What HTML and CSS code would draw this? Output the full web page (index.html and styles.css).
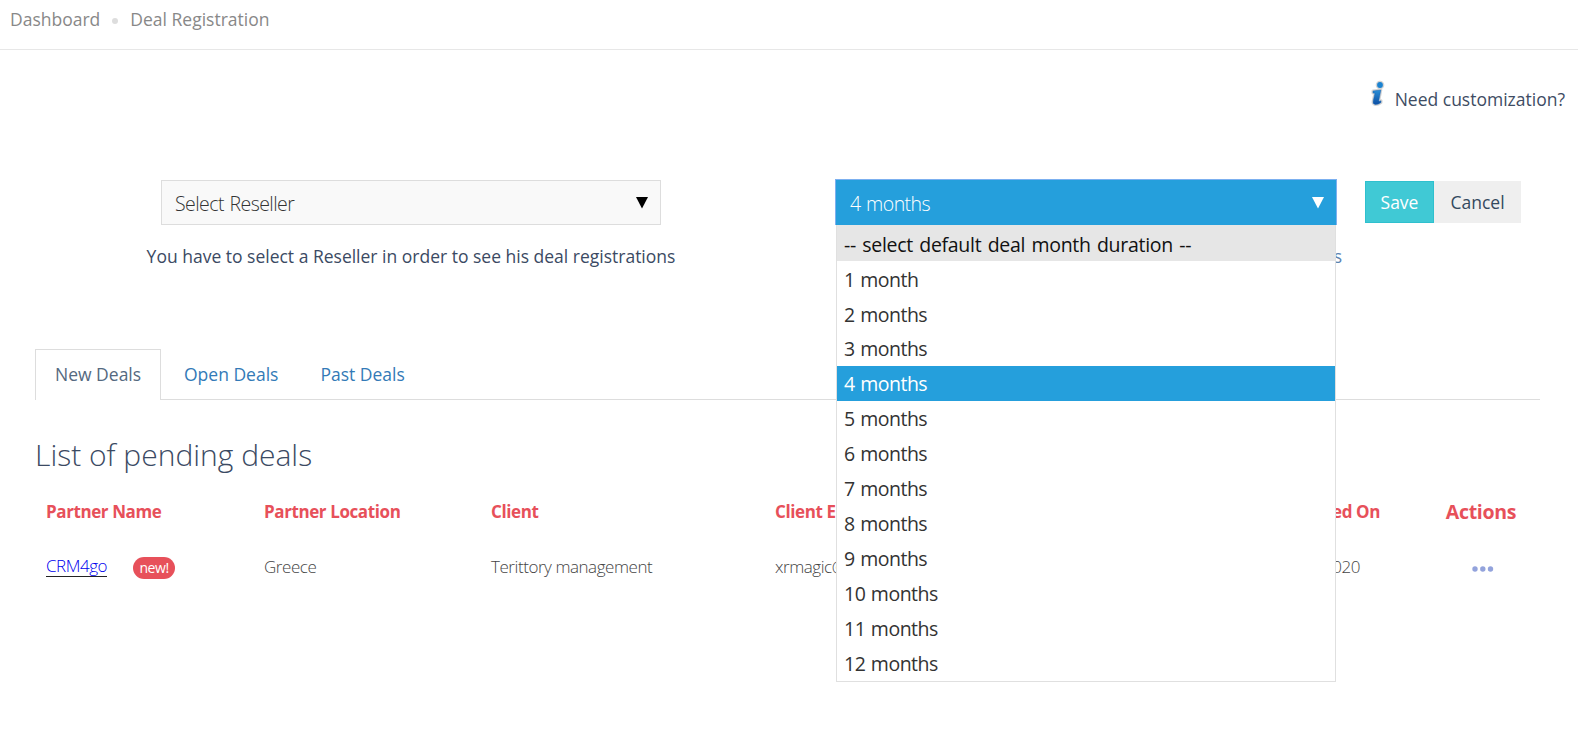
FILE: index.html
```html
<!DOCTYPE html>
<html lang="en">
<head>
<meta charset="utf-8">
<title>Deal Registration</title>
<link rel="stylesheet" href="styles.css">
</head>
<body>
<nav class="breadcrumb"><span class="crumb">Dashboard</span><i class="crumb-dot"></i><span class="crumb">Deal Registration</span></nav>
<main class="page">
  <div class="help">
    <svg class="help-icon" width="18" height="28" viewBox="0 0 18 28">
      <defs><linearGradient id="blue" x1="0" y1="0" x2="0" y2="1"><stop offset="0" stop-color="#2a8fd6"/><stop offset="1" stop-color="#0d4ea3"/></linearGradient></defs>
      <g stroke="#d4d4d4" stroke-width="3" stroke-linejoin="round" fill="#d4d4d4"><circle cx="11" cy="5" r="2.8"/><path d="M4 11L11.800 10L9.800 20.500Q9.700 22 12 20.800L12 22.500Q9 24.800 6.200 24.500Q3.500 24 4.200 21L6 13.200L4 13Z"/></g>
      <circle cx="11" cy="5" r="2.900" fill="#1b83d1"/>
      <path fill="url(#blue)" stroke="#1765b4" stroke-width=".5" d="M4 11L11.800 10L9.800 20.500Q9.700 22 12 20.800L12 22.500Q9 24.800 6.200 24.500Q3.500 24 4.200 21L6 13.200L4 13Z"/>
    </svg>
    <span class="help-text">Need customization?</span>
  </div>

  <section class="filters">
    <div class="filter">
      <div class="select"><span class="select-text">Select Reseller</span><svg class="caret" width="12" height="12" viewBox="0 0 12 12"><path d="M0 0H12L6 11.500Z" fill="currentColor"/></svg></div>
      <p class="hint">You have to select a Reseller in order to see his deal registrations</p>
    </div>
    <div class="filter">
      <div class="select select-open"><span class="select-text">4 months</span><svg class="caret" width="12" height="12" viewBox="0 0 12 12"><path d="M0 0H12L6 11.500Z" fill="currentColor"/></svg></div>
      <p class="hint hint-link">Default duration of the deal registrations</p>
      <ul class="menu">
        <li class="option option-label">-- select default deal month duration --</li>
        <li class="option option-early">1 month</li>
        <li class="option option-early">2 months</li>
        <li class="option">3 months</li>
        <li class="option option-selected">4 months</li>
        <li class="option">5 months</li>
        <li class="option">6 months</li>
        <li class="option">7 months</li>
        <li class="option">8 months</li>
        <li class="option">9 months</li>
        <li class="option">10 months</li>
        <li class="option">11 months</li>
        <li class="option">12 months</li>
      </ul>
    </div>
    <div class="buttons"><button class="btn btn-save">Save</button><button class="btn btn-cancel">Cancel</button></div>
  </section>

  <section class="deals">
    <div class="tabs"><a class="tab tab-active">New Deals</a><a class="tab tab-open">Open Deals</a><a class="tab">Past Deals</a></div>
    <h1 class="title">List of pending deals</h1>
    <div class="row row-head">
      <span>Partner Name</span><span>Partner Location</span><span>Client</span><span>Client Email</span><span class="date">Submitted On</span><span class="actions">Actions</span>
    </div>
    <div class="row row-body">
      <span class="partner"><a class="partner-link">CRM4go</a><b class="badge">new!</b></span><span>Greece</span><span class="client">Terittory management</span><span>xrmagic@crm4go</span><span class="date">2020</span>
      <span class="actions"><svg class="dots" width="22" height="6" viewBox="0 0 22 6"><g fill="#93a3dc"><circle cx="3" cy="3" r="2.700"/><circle cx="10.800" cy="3" r="2.700"/><circle cx="18.500" cy="3" r="2.700"/></g></svg></span>
    </div>
  </section>
</main>
</body>
</html>
```
FILE: styles.css
```css
* { box-sizing: border-box; }
body { margin: 0; background: #fff; color: #3b4a63; font: 17.5px/25px "Open Sans", sans-serif; height: 741px; overflow: hidden; }
.breadcrumb { display: flex; align-items: center; height: 50px; padding: 0 0 10px 10px; border-bottom: 1px solid #e7e7e7; color: #888; }
.crumb-dot { width: 6px; height: 6px; margin: 2px 12px 0 12px; border-radius: 50%; background: #ddd; }
.help { display: flex; justify-content: flex-end; height: 130px; padding: 29px 13px 0 0; color: #3e4c63; }
.help-icon { margin-right: 8px; margin-top: 1px; }
.help-text { margin-top: 8px; }
.filters { display: flex; height: 169px; padding-left: 161px; }
.filter { position: relative; width: 500px; margin-right: 175px; }
.select { display: flex; align-items: center; justify-content: space-between; height: 45px; padding: 1px 12px 0 13px; border: 1px solid #ddd; background: #f9f9f9; color: #333; font-size: 19.5px; font-weight: 300; letter-spacing: -0.55px; word-spacing: 1px; }
.select .caret { margin-bottom: 1px; color: #000; }
.select-open { height: 46px; width: 502px; margin: -1px 0 0 -1px; padding: 2px 12px 0 14px; border: 1px solid #7cb0f0; border-bottom: 0; background: #259fdc; color: #fff; }
.select-open .caret { margin-bottom: 2px; color: #fff; }
.hint { margin: 19px -30px 0; text-align: center; white-space: nowrap; }
.hint-link { margin: 19px -6px 0 0; text-align: right; color: #5b82b0; }
.menu { position: absolute; top: 45px; left: 0; width: 500px; margin: 0; padding: 0; list-style: none; background: #fff; border: 1px solid #e0e0e0; border-top: 0; z-index: 2; }
.option { height: 35px; padding-left: 7px; color: #333; font-size: 19.500px; line-height: 36px; letter-spacing: -0.5px; word-spacing: 1px; }
.option-early { line-height: 38px; }
.option-label { height: 36px; background: #e6e6e6; color: #111; line-height: 39px; letter-spacing: -0.3px; word-spacing: 1.6px; }
.option-selected { background: #259fdc; color: #fff; font-weight: 500; }
.buttons { display: flex; margin: 1px 0 0 -146px; }
.btn { height: 42px; border: 0; font: inherit; }
.btn-save { width: 69px; padding: 0; background: #40c9d5; border: 1px solid #2fc0ce; color: #fff; font-weight: 500; }
.btn-cancel { width: 87px; padding: 0; background: #efefef; color: #34495e; }
.deals { padding: 0 38px 0 35px; }
.tabs { display: flex; height: 51px; border-bottom: 1px solid #ddd; color: #337ab7; }
.tab { padding: 13px 0 0; margin-left: 42px; }
.tab-open { margin-left: 23px; }
.tab-active { width: 126px; height: 51px; margin: 0; padding: 12px 0 0 19px; border: 1px solid #ddd; border-bottom: 0; background: #fff; color: #556980; }
.title { margin: 34px 0 0; font-size: 30px; font-weight: 300; line-height: 42px; }
.row { display: grid; grid-template-columns: 218px 227px 284px 420px 185px 160px; padding-left: 11px; white-space: nowrap; }
.row-head { margin-top: 23px; color: #e7505a; font-weight: 700; font-size: 17px; letter-spacing: -0.4px; }
.row-body { margin-top: 30px; color: #444; font-weight: 300; font-size: 17px; letter-spacing: -0.45px; }
.date { text-align: right; }
.row-body .date { padding-right: 20px; }
.actions { padding-left: 42px; text-align: center; }
.row-head .actions { font-size: 19.500px; letter-spacing: -0.3px; }
.dots { margin: 0 0 1px 4px; }
.partner { display: flex; align-items: center; }
.partner-link { color: #00e; border-bottom: 1px solid #222; line-height: 20px; }
.badge { width: 42px; height: 22px; margin-left: 26px; margin-top: 2px; border-radius: 11px; background: #e7505a; color: #fff; font-size: 14px; font-weight: 400; line-height: 22px; text-align: center; letter-spacing: -0.4px; }
```
